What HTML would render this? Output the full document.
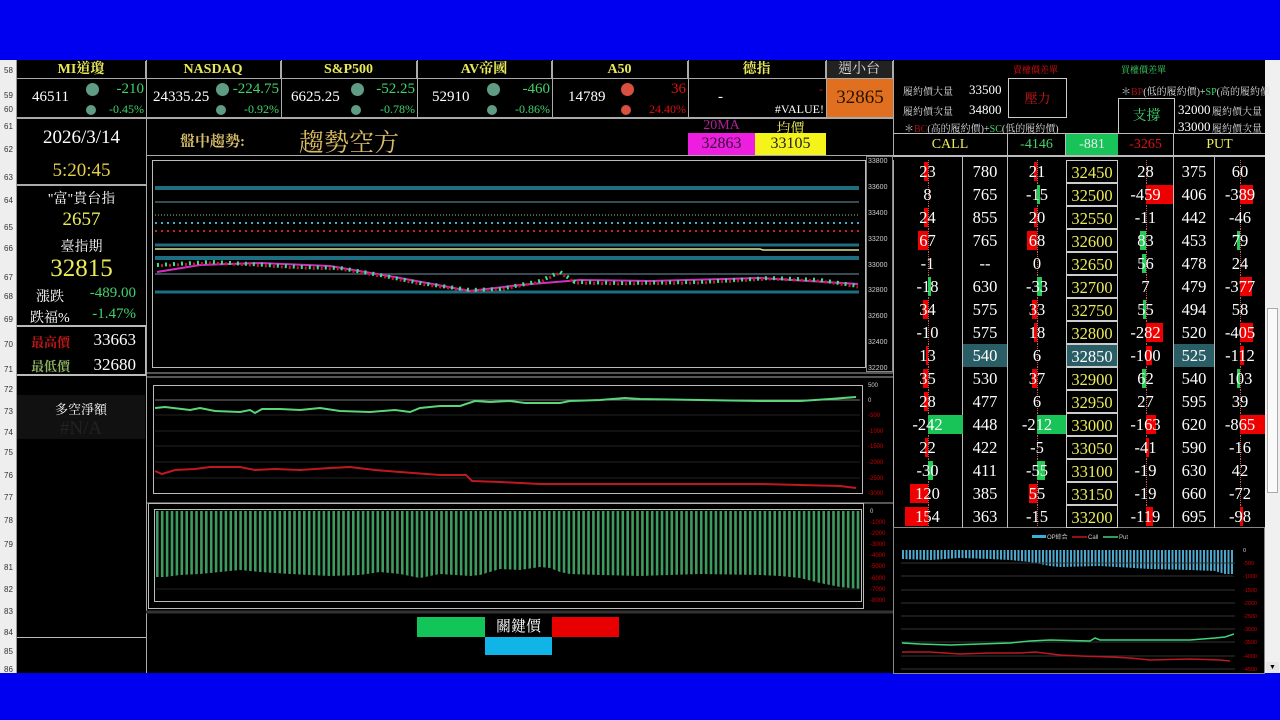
<!DOCTYPE html>
<html><head><meta charset="utf-8">
<style>
*{margin:0;padding:0;box-sizing:border-box}
body{width:1280px;height:720px;overflow:hidden;background:#000;position:relative;font-family:"Liberation Serif","Noto Serif CJK TC",serif;color:#fff}
.a{position:absolute;white-space:nowrap}
.blue{background:#0000f0}
.y{color:#ecec5a}
.g{color:#3fd46a}
.r{color:#d11}
.hd{position:absolute;top:61px;height:17px;font-size:14px;font-weight:bold;color:#e8e85a;text-align:center;line-height:17px;border-right:1px solid #aaa}
.rn{position:absolute;left:0;width:17px;font-size:8px;color:#333;text-align:center;font-family:"Liberation Sans",sans-serif}
.dot{position:absolute;border-radius:50%;background:#5f9c83}
.row{position:absolute;left:893px;width:372px;height:23px;font-size:16.5px;line-height:24px}
.row div{position:absolute;top:0;height:23px;text-align:center}
.c1{left:0;width:70px;border-right:1px solid #bbb}
.c2{left:70px;width:45px;border-right:1px solid #bbb}
.c3{left:115px;width:58px}
.c4{left:173px;width:52px;color:#ecec5a;border:1.5px solid #ccc}
.c5{left:225px;width:56px;border-right:1px solid #bbb}
.c6{left:281px;width:41px;border-right:1px solid #bbb}
.c7{left:322px;width:50px}
.row b{position:absolute;top:2px;height:19px;font-weight:normal}
.row i{position:absolute;top:0;height:23px;border-left:1px dotted #c55}
.row span{position:relative}
.hl{background:#2a5e66}
</style></head><body>
<div class="a blue" style="left:0;top:0;width:1280px;height:60px"></div>
<div class="a blue" style="left:0;top:673px;width:1280px;height:47px"></div>
<div class="a" style="left:0;top:60px;width:17px;height:613px;background:#eee;border-right:1px solid #999"></div>
<div class="rn" style="top:66px">58</div><div class="rn" style="top:91px">59</div><div class="rn" style="top:105px">60</div><div class="rn" style="top:122px">61</div><div class="rn" style="top:145px">62</div><div class="rn" style="top:173px">63</div><div class="rn" style="top:196px">64</div><div class="rn" style="top:223px">65</div><div class="rn" style="top:244px">66</div><div class="rn" style="top:273px">67</div><div class="rn" style="top:292px">68</div><div class="rn" style="top:315px">69</div><div class="rn" style="top:340px">70</div><div class="rn" style="top:365px">71</div><div class="rn" style="top:385px">72</div><div class="rn" style="top:407px">73</div><div class="rn" style="top:428px">74</div><div class="rn" style="top:448px">75</div><div class="rn" style="top:471px">76</div><div class="rn" style="top:493px">77</div><div class="rn" style="top:516px">78</div><div class="rn" style="top:540px">79</div><div class="rn" style="top:563px">81</div><div class="rn" style="top:585px">82</div><div class="rn" style="top:607px">83</div><div class="rn" style="top:628px">84</div><div class="rn" style="top:647px">85</div><div class="rn" style="top:665px">86</div>
<!-- scrollbar -->
<div class="a" style="left:1265px;top:60px;width:15px;height:613px;background:#f0f0f0"></div>
<div class="a" style="left:1267px;top:308px;width:11px;height:185px;background:#fafafa;border:1px solid #aaa"></div>
<div class="a" style="left:1266px;top:662px;width:13px;height:11px;background:#e6e6e6;font-size:7px;color:#000;text-align:center;line-height:11px">▼</div>

<!-- top headers -->
<div class="hd" style="left:17px;width:129px">MI道瓊</div>
<div class="hd" style="left:146px;width:135px">NASDAQ</div>
<div class="hd" style="left:281px;width:136px">S&amp;P500</div>
<div class="hd" style="left:417px;width:135px">AV帝國</div>
<div class="hd" style="left:552px;width:136px">A50</div>
<div class="hd" style="left:688px;width:138px">德指</div>
<div class="hd" style="left:826px;width:67px;background:#222;color:#ddd;font-weight:normal">週小台</div>
<div class="a" style="left:17px;top:78px;width:876px;height:1px;background:#aaa"></div>
<div class="a" style="left:17px;top:117px;width:876px;height:2px;background:#aaa"></div>
<div class="a" style="left:146px;top:60px;width:1px;height:58px;background:#aaa"></div>
<div class="a" style="left:281px;top:60px;width:1px;height:58px;background:#aaa"></div>
<div class="a" style="left:417px;top:60px;width:1px;height:58px;background:#aaa"></div>
<div class="a" style="left:552px;top:60px;width:1px;height:58px;background:#aaa"></div>
<div class="a" style="left:688px;top:60px;width:1px;height:58px;background:#aaa"></div>
<div class="a" style="left:826px;top:60px;width:1px;height:58px;background:#aaa"></div>

<div class="a" style="left:32px;top:89px;font-size:15px">46511</div>
<div class="dot" style="left:86px;top:83px;width:13px;height:13px"></div><div class="dot" style="left:86px;top:105px;width:10px;height:10px"></div>
<div class="a g" style="right:1136px;top:81px;font-size:15px">-210</div><div class="a g" style="right:1136px;top:102px;font-size:12px">-0.45%</div>

<div class="a" style="left:153px;top:89px;font-size:15px">24335.25</div>
<div class="dot" style="left:216px;top:83px;width:13px;height:13px"></div><div class="dot" style="left:216px;top:105px;width:10px;height:10px"></div>
<div class="a g" style="right:1001px;top:81px;font-size:15px">-224.75</div><div class="a g" style="right:1001px;top:102px;font-size:12px">-0.92%</div>

<div class="a" style="left:291px;top:89px;font-size:15px">6625.25</div>
<div class="dot" style="left:351px;top:83px;width:13px;height:13px"></div><div class="dot" style="left:351px;top:105px;width:10px;height:10px"></div>
<div class="a g" style="right:865px;top:81px;font-size:15px">-52.25</div><div class="a g" style="right:865px;top:102px;font-size:12px">-0.78%</div>

<div class="a" style="left:432px;top:89px;font-size:15px">52910</div>
<div class="dot" style="left:487px;top:83px;width:13px;height:13px"></div><div class="dot" style="left:487px;top:105px;width:10px;height:10px"></div>
<div class="a g" style="right:730px;top:81px;font-size:15px">-460</div><div class="a g" style="right:730px;top:102px;font-size:12px">-0.86%</div>

<div class="a" style="left:568px;top:89px;font-size:15px">14789</div>
<div class="dot" style="left:621px;top:83px;width:13px;height:13px;background:#d9503f"></div><div class="dot" style="left:621px;top:105px;width:10px;height:10px;background:#d9503f"></div>
<div class="a r" style="right:594px;top:81px;font-size:15px">36</div><div class="a r" style="right:594px;top:102px;font-size:12px">24.40%</div>

<div class="a" style="left:718px;top:89px;font-size:15px">-</div>
<div class="a r" style="right:457px;top:82px;font-size:12px">-</div>
<div class="a" style="right:456px;top:102px;font-size:12px">#VALUE!</div>

<div class="a" style="left:827px;top:79px;width:66px;height:38px;background:#e0701f;color:#2a1000;font-size:19px;text-align:center;line-height:38px">32865</div>

<!-- left panel -->
<div class="a" style="left:146px;top:118px;width:1px;height:555px;background:#aaa"></div>
<div class="a" style="left:17px;top:127px;width:129px;text-align:center;font-size:19px">2026/3/14</div>
<div class="a" style="left:17px;top:160px;width:129px;text-align:center;font-size:19px;color:#e6d04a">5:20:45</div>
<div class="a" style="left:17px;top:184px;width:129px;height:2px;background:#aaa"></div>
<div class="a" style="left:17px;top:188px;width:129px;text-align:center;font-size:14px">"富"貴台指</div>
<div class="a" style="left:17px;top:209px;width:129px;text-align:center;font-size:19px;color:#ecec5a">2657</div>
<div class="a" style="left:17px;top:236px;width:129px;text-align:center;font-size:14px">臺指期</div>
<div class="a" style="left:17px;top:255px;width:129px;text-align:center;font-size:25px;color:#ecec5a">32815</div>
<div class="a" style="left:36px;top:286px;font-size:14px">漲跌</div><div class="a g" style="right:1144px;top:285px;font-size:15px">-489.00</div>
<div class="a" style="left:30px;top:307px;font-size:14px">跌福%</div><div class="a g" style="right:1144px;top:306px;font-size:15px">-1.47%</div>
<div class="a" style="left:17px;top:325px;width:129px;height:51px;border:2px solid #bbb;border-left:none;border-right:1px solid #bbb"></div>
<div class="a" style="left:31px;top:332px;font-size:13px;color:#c01818;font-weight:bold">最高價</div><div class="a" style="right:1144px;top:330px;font-size:17px">33663</div>
<div class="a" style="left:31px;top:356px;font-size:13px;color:#8ab060;font-weight:bold">最低價</div><div class="a" style="right:1144px;top:355px;font-size:17px">32680</div>
<div class="a" style="left:17px;top:395px;width:128px;height:44px;background:#111"></div>
<div class="a" style="left:17px;top:399px;width:128px;text-align:center;font-size:13px">多空淨額</div>
<div class="a" style="left:17px;top:418px;width:128px;text-align:center;font-size:19px;color:#222">#N/A</div>
<div class="a" style="left:17px;top:637px;width:129px;height:1px;background:#bbb"></div>

<!-- middle header -->
<div class="a" style="left:180px;top:130px;font-size:15px;font-weight:bold;color:#d6bd6a">盤中趨勢:</div>
<div class="a" style="left:299px;top:123px;font-size:25px;color:#d9bc62">趨勢空方</div>
<div class="a" style="left:688px;top:118px;width:67px;text-align:center;font-size:14px;color:#b0209a">20MA</div>
<div class="a" style="left:755px;top:118px;width:71px;text-align:center;font-size:14px;color:#ecec5a">均價</div>
<div class="a" style="left:688px;top:133px;width:67px;height:22px;background:#ee1ee0;color:#301030;font-size:16px;text-align:center;line-height:22px">32863</div>
<div class="a" style="left:755px;top:133px;width:71px;height:22px;background:#f4f41a;color:#222;font-size:16px;text-align:center;line-height:22px">33105</div>
<div class="a" style="left:146px;top:155px;width:747px;height:1px;background:#aaa"></div>
<div class="a" style="left:893px;top:60px;width:1px;height:613px;background:#aaa"></div>

<svg class="a" style="left:0;top:0" width="1280" height="720">
<rect x="152.5" y="160.5" width="713" height="207" fill="none" stroke="#bbb"/>
<rect x="866.5" y="156.5" width="26" height="215" fill="none" stroke="#888"/>
<g font-family="Liberation Sans,sans-serif" font-size="7" fill="#ccc">
<text x="868" y="163">33800</text><text x="868" y="189">33600</text><text x="868" y="215">33400</text><text x="868" y="241">33200</text><text x="868" y="267">33000</text><text x="868" y="292">32800</text><text x="868" y="318">32600</text><text x="868" y="344">32400</text><text x="868" y="370">32200</text></g>
<line x1="155" y1="188" x2="859" y2="188" stroke="#1f6d80" stroke-width="4"/>
<line x1="155" y1="202" x2="859" y2="202" stroke="#4a6470" stroke-width="1.5"/>
<line x1="155" y1="215" x2="859" y2="215" stroke="#8c8" stroke-width="1" stroke-dasharray="1 2"/>
<line x1="155" y1="223" x2="859" y2="223" stroke="#3ab0c8" stroke-width="2" stroke-dasharray="2 4"/>
<line x1="155" y1="231" x2="859" y2="231" stroke="#c22" stroke-width="2" stroke-dasharray="2 4"/>
<line x1="155" y1="245" x2="859" y2="245" stroke="#1f6d80" stroke-width="3"/>
<polyline points="155,249 760,249 763,250 859,250" fill="none" stroke="#e0e090" stroke-width="1.5"/>
<line x1="155" y1="258" x2="859" y2="258" stroke="#1f6d80" stroke-width="4"/>
<line x1="155" y1="274" x2="859" y2="274" stroke="#4a6470" stroke-width="1.5"/>
<line x1="155" y1="292" x2="859" y2="292" stroke="#1f6d80" stroke-width="3"/>
<polyline points="157,272 200,265 260,263 330,266 400,278 470,291 520,285 580,280 650,281 760,278 858,284" fill="none" stroke="#d42ec0" stroke-width="2"/>
<polyline points="157,265 210,262 250,264 300,267 340,268 380,275 420,283 470,290 500,289 540,281 560,272 575,282 620,283 700,282 770,278 820,280 858,286" fill="none" stroke="#3ee08a" stroke-width="4" stroke-dasharray="2 6"/>
<polyline points="157,266 210,263 250,265 300,268 340,269 380,276 420,284 470,291 500,290 540,282 560,273 575,283 620,284 700,283 770,279 820,281 858,287" fill="none" stroke="#c81830" stroke-width="3" stroke-dasharray="2 6" stroke-dashoffset="4"/>
<line x1="146" y1="373" x2="893" y2="373" stroke="#aaa"/>
<line x1="146" y1="377" x2="893" y2="377" stroke="#aaa"/>
<rect x="153.5" y="385.5" width="709" height="108" fill="none" stroke="#bbb"/>
<g stroke="#222"><line x1="155" y1="415" x2="860" y2="415"/><line x1="155" y1="431" x2="860" y2="431"/><line x1="155" y1="446" x2="860" y2="446"/><line x1="155" y1="462" x2="860" y2="462"/><line x1="155" y1="478" x2="860" y2="478"/></g>
<line x1="155" y1="400" x2="860" y2="400" stroke="#777"/>
<polyline points="155,408 165,407 190,410 200,408 215,411 240,412 250,410 255,413 262,409 280,409 300,410 320,408 340,411 370,412 395,410 410,412 420,408 440,406 460,406 475,401 490,402 510,401 525,403 545,403 560,403 570,401 600,400 625,398 640,399 700,400 760,401 800,401 830,399 856,397" fill="none" stroke="#58d77a" stroke-width="2"/>
<polyline points="155,471 162,474 175,470 195,469 210,467 240,467 255,470 275,469 300,470 330,468 350,467 375,470 400,472 440,475 466,475 472,481 500,482 540,484 580,484 620,484 660,484 700,484 760,484 800,485 840,486 856,488" fill="none" stroke="#c01820" stroke-width="2"/>
<g font-family="Liberation Sans,sans-serif" font-size="6" fill="#c00"><text x="868" y="387" fill="#ccc">500</text><text x="868" y="402" fill="#ccc">0</text><text x="868" y="417">-500</text><text x="868" y="433">-1000</text><text x="868" y="448">-1500</text><text x="868" y="464">-2000</text><text x="868" y="480">-2500</text><text x="868" y="495">-3000</text></g>
<line x1="146" y1="503" x2="893" y2="503" stroke="#aaa"/>
<rect x="148.5" y="503.5" width="715" height="105" fill="none" stroke="#bbb"/>
<rect x="154.5" y="509.5" width="707" height="92" fill="none" stroke="#bbb"/>
<line x1="156" y1="553" x2="860" y2="553" stroke="#3e9a5e" stroke-width="84" stroke-dasharray="2.6 2.3"/>
<polygon points="156,577 165,577 180,575 200,574 220,572 240,570 260,572 290,574 330,576 360,575 380,572 400,574 420,578 440,574 470,576 480,575 500,569 520,570 540,567 550,568 560,572 570,574 600,575 640,576 700,574 760,575 780,576 800,578 820,583 840,587 860,589 860,600 156,600" fill="#000"/>
<line x1="156" y1="589" x2="860" y2="589" stroke="#222"/>
<g font-family="Liberation Sans,sans-serif" font-size="6" fill="#c00"><text x="870" y="513" fill="#ccc">0</text><text x="870" y="524">-1000</text><text x="870" y="535">-2000</text><text x="870" y="546">-3000</text><text x="870" y="557">-4000</text><text x="870" y="568">-5000</text><text x="870" y="580">-6000</text><text x="870" y="591">-7000</text><text x="870" y="602">-8000</text></g>
<line x1="146" y1="612" x2="893" y2="612" stroke="#333" stroke-width="3"/>
<rect x="893.5" y="527.5" width="371" height="146" fill="none" stroke="#888"/>
<rect x="1032" y="535" width="14" height="3" fill="#3ab0d8"/><text x="1047" y="539" font-size="6" fill="#ccc" font-family="Liberation Sans,Noto Sans CJK TC,sans-serif">OP綜合</text>
<line x1="1072" y1="537" x2="1087" y2="537" stroke="#c01820" stroke-width="1.5"/><text x="1088" y="539" font-size="6" fill="#ccc" font-family="Liberation Sans,sans-serif">Call</text>
<line x1="1103" y1="537" x2="1118" y2="537" stroke="#3ed47a" stroke-width="1.5"/><text x="1119" y="539" font-size="6" fill="#ccc" font-family="Liberation Sans,sans-serif">Put</text>
<g stroke="#333"><line x1="901" y1="563" x2="1235" y2="563"/><line x1="901" y1="576" x2="1235" y2="576"/><line x1="901" y1="590" x2="1235" y2="590"/><line x1="901" y1="603" x2="1235" y2="603"/><line x1="901" y1="616" x2="1235" y2="616"/><line x1="901" y1="629" x2="1235" y2="629"/><line x1="901" y1="642" x2="1235" y2="642"/><line x1="901" y1="656" x2="1235" y2="656"/><line x1="901" y1="669" x2="1235" y2="669"/></g>
<line x1="902" y1="562" x2="1234" y2="562" stroke="#4aa8cc" stroke-width="24" stroke-dasharray="2 1.5"/>
<polygon points="902,559 930,560 960,558 990,559 1010,560 1030,562 1050,566 1060,567 1100,566 1150,569 1190,570 1215,571 1225,574 1234,576 1236,578 1236,575 902,575" fill="#000"/>
<line x1="901" y1="563" x2="1235" y2="563" stroke="#333"/>
<polyline points="902,643 920,644 950,645 980,644 1010,643 1030,641 1050,640 1090,641 1095,638 1100,640 1130,640 1160,640 1190,640 1215,638 1225,637 1234,634" fill="none" stroke="#3ed47a" stroke-width="1.5"/>
<polyline points="902,652 930,652 960,654 990,653 1020,653 1035,652 1060,655 1080,656 1110,657 1130,658 1150,660 1190,659 1220,660 1230,661" fill="none" stroke="#c01820" stroke-width="1.5"/>
<g font-family="Liberation Sans,sans-serif" font-size="5.5" fill="#c00"><text x="1243" y="552" fill="#ccc">0</text><text x="1243" y="565">-500</text><text x="1243" y="578">-1000</text><text x="1243" y="592">-1500</text><text x="1243" y="605">-2000</text><text x="1243" y="618">-2500</text><text x="1243" y="631">-3000</text><text x="1243" y="644">-3500</text><text x="1243" y="658">-4000</text><text x="1243" y="671">-4500</text></g>
</svg>

<div class="a" style="left:417px;top:617px;width:68px;height:20px;background:#12c558"></div>
<div class="a" style="left:485px;top:617px;width:67px;height:20px;text-align:center;font-size:15px;line-height:20px">關鍵價</div>
<div class="a" style="left:552px;top:617px;width:67px;height:20px;background:#e80000"></div>
<div class="a" style="left:485px;top:637px;width:67px;height:18px;background:#10b4e6"></div>

<div class="a r" style="left:1013px;top:63px;font-size:9px">賣權價差單</div>
<div class="a g" style="left:1121px;top:63px;font-size:9px">買權價差單</div>
<div class="a" style="left:903px;top:83px;font-size:10px;color:#ddd">履約價大量</div><div class="a" style="left:969px;top:82px;font-size:13px">33500</div>
<div class="a" style="left:903px;top:103px;font-size:10px;color:#ddd">履約價次量</div><div class="a" style="left:969px;top:102px;font-size:13px">34800</div>
<div class="a" style="left:1008px;top:78px;width:59px;height:40px;border:1px solid #ccc;color:#d01818;font-size:13px;text-align:center;line-height:40px">壓力</div>
<div class="a" style="left:904px;top:120px;font-size:10px;color:#ddd">＊<span style="color:#a01010">BC</span>(高的履約價)+<span class="g">SC</span>(低的履約價)</div>
<div class="a" style="left:1121px;top:83px;font-size:10px;color:#ddd">＊<span style="color:#a01010">BP</span>(低的履約價)+<span class="g">SP</span>(高的履約價</div>
<div class="a" style="left:1118px;top:98px;width:57px;height:36px;border:1px solid #ccc;border-bottom:none;color:#3fd46a;font-size:14px;text-align:center;line-height:36px">支撐</div>
<div class="a" style="left:1178px;top:102px;font-size:13px">32000</div><div class="a" style="left:1212px;top:103px;font-size:10px;color:#ddd">履約價大量</div>
<div class="a" style="left:1178px;top:119px;font-size:13px">33000</div><div class="a" style="left:1212px;top:120px;font-size:10px;color:#ddd">履約價次量</div>

<div class="a" style="left:893px;top:133px;width:372px;height:1px;background:#bbb"></div>
<div class="a" style="left:893px;top:155px;width:372px;height:2px;background:#bbb"></div>
<div class="a y" style="left:893px;top:134px;width:115px;height:21px;text-align:center;font-size:14px;line-height:21px;border-right:1px solid #bbb">CALL</div>
<div class="a g" style="left:1008px;top:134px;width:58px;height:21px;text-align:center;font-size:14px;line-height:21px;border-right:1px solid #bbb">-4146</div>
<div class="a" style="left:1066px;top:134px;width:52px;height:21px;background:#18c45a;text-align:center;font-size:14px;line-height:21px;color:#eee">-881</div>
<div class="a r" style="left:1118px;top:134px;width:56px;height:21px;text-align:center;font-size:14px;line-height:21px;border-right:1px solid #bbb">-3265</div>
<div class="a y" style="left:1174px;top:134px;width:91px;height:21px;text-align:center;font-size:14px;line-height:21px">PUT</div>
<div class="a" style="left:893px;top:157px;width:372px;height:3px;background:#000"></div>
<div class="a" style="left:962px;top:157px;width:1px;height:3px;background:#bbb"></div>
<div class="a" style="left:1007px;top:157px;width:1px;height:3px;background:#bbb"></div>
<div class="a" style="left:1173px;top:157px;width:1px;height:3px;background:#bbb"></div>
<div class="a" style="left:1214px;top:157px;width:1px;height:3px;background:#bbb"></div>

<div class="row" style="top:160px"><div class="c1"><i style="left:35px"></i><b style="left:31px;width:4px;background:#e00"></b><span>23</span></div><div class="c2">780</div><div class="c3"><i style="left:29px"></i><b style="left:26px;width:3px;background:#e00"></b><span>21</span></div><div class="c4">32450</div><div class="c5"><i style="left:28px"></i><span>28</span></div><div class="c6">375</div><div class="c7"><i style="left:25px"></i><span>60</span></div></div>
<div class="row" style="top:183px"><div class="c1"><i style="left:35px"></i><span>8</span></div><div class="c2">765</div><div class="c3"><i style="left:29px"></i><b style="left:29px;width:3px;background:#2c5"></b><span>-15</span></div><div class="c4">32500</div><div class="c5"><i style="left:28px"></i><b style="left:28px;width:27px;background:#e00"></b><span>-459</span></div><div class="c6">406</div><div class="c7"><i style="left:25px"></i><b style="left:25px;width:13px;background:#e00"></b><span>-389</span></div></div>
<div class="row" style="top:206px"><div class="c1"><i style="left:35px"></i><b style="left:31px;width:4px;background:#e00"></b><span>24</span></div><div class="c2">855</div><div class="c3"><i style="left:29px"></i><b style="left:26px;width:3px;background:#e00"></b><span>20</span></div><div class="c4">32550</div><div class="c5"><i style="left:28px"></i><span>-11</span></div><div class="c6">442</div><div class="c7"><i style="left:25px"></i><span>-46</span></div></div>
<div class="row" style="top:229px"><div class="c1"><i style="left:35px"></i><b style="left:25px;width:10px;background:#e00"></b><span>67</span></div><div class="c2">765</div><div class="c3"><i style="left:29px"></i><b style="left:19px;width:10px;background:#e00"></b><span>68</span></div><div class="c4">32600</div><div class="c5"><i style="left:28px"></i><b style="left:22px;width:6px;background:#2c5"></b><span>83</span></div><div class="c6">453</div><div class="c7"><i style="left:25px"></i><b style="left:22px;width:3px;background:#2c5"></b><span>79</span></div></div>
<div class="row" style="top:252px"><div class="c1"><i style="left:35px"></i><span>-1</span></div><div class="c2">--</div><div class="c3"><i style="left:29px"></i><span>0</span></div><div class="c4">32650</div><div class="c5"><i style="left:28px"></i><b style="left:24px;width:4px;background:#2c5"></b><span>56</span></div><div class="c6">478</div><div class="c7"><i style="left:25px"></i><span>24</span></div></div>
<div class="row" style="top:275px"><div class="c1"><i style="left:35px"></i><b style="left:35px;width:3px;background:#2c5"></b><span>-18</span></div><div class="c2">630</div><div class="c3"><i style="left:29px"></i><b style="left:29px;width:5px;background:#2c5"></b><span>-33</span></div><div class="c4">32700</div><div class="c5"><i style="left:28px"></i><span>7</span></div><div class="c6">479</div><div class="c7"><i style="left:25px"></i><b style="left:25px;width:12px;background:#e00"></b><span>-377</span></div></div>
<div class="row" style="top:298px"><div class="c1"><i style="left:35px"></i><b style="left:30px;width:5px;background:#e00"></b><span>34</span></div><div class="c2">575</div><div class="c3"><i style="left:29px"></i><b style="left:24px;width:5px;background:#e00"></b><span>33</span></div><div class="c4">32750</div><div class="c5"><i style="left:28px"></i><b style="left:25px;width:3px;background:#2c5"></b><span>55</span></div><div class="c6">494</div><div class="c7"><i style="left:25px"></i><span>58</span></div></div>
<div class="row" style="top:321px"><div class="c1"><i style="left:35px"></i><span>-10</span></div><div class="c2">575</div><div class="c3"><i style="left:29px"></i><b style="left:26px;width:3px;background:#e00"></b><span>18</span></div><div class="c4">32800</div><div class="c5"><i style="left:28px"></i><b style="left:28px;width:17px;background:#e00"></b><span>-282</span></div><div class="c6">520</div><div class="c7"><i style="left:25px"></i><b style="left:25px;width:13px;background:#e00"></b><span>-405</span></div></div>
<div class="row" style="top:344px"><div class="c1"><i style="left:35px"></i><b style="left:33px;width:2px;background:#e00"></b><span>13</span></div><div class="c2 hl">540</div><div class="c3"><i style="left:29px"></i><span>6</span></div><div class="c4 hl" style="color:#fff">32850</div><div class="c5"><i style="left:28px"></i><b style="left:28px;width:6px;background:#e00"></b><span>-100</span></div><div class="c6 hl">525</div><div class="c7"><i style="left:25px"></i><b style="left:25px;width:4px;background:#e00"></b><span>-112</span></div></div>
<div class="row" style="top:367px"><div class="c1"><i style="left:35px"></i><b style="left:30px;width:5px;background:#e00"></b><span>35</span></div><div class="c2">530</div><div class="c3"><i style="left:29px"></i><b style="left:24px;width:5px;background:#e00"></b><span>37</span></div><div class="c4">32900</div><div class="c5"><i style="left:28px"></i><b style="left:24px;width:4px;background:#2c5"></b><span>62</span></div><div class="c6">540</div><div class="c7"><i style="left:25px"></i><b style="left:22px;width:3px;background:#2c5"></b><span>103</span></div></div>
<div class="row" style="top:390px"><div class="c1"><i style="left:35px"></i><b style="left:31px;width:4px;background:#e00"></b><span>28</span></div><div class="c2">477</div><div class="c3"><i style="left:29px"></i><span>6</span></div><div class="c4">32950</div><div class="c5"><i style="left:28px"></i><span>27</span></div><div class="c6">595</div><div class="c7"><i style="left:25px"></i><span>39</span></div></div>
<div class="row" style="top:413px"><div class="c1"><i style="left:35px"></i><b style="left:35px;width:35px;background:#18c458"></b><span>-242</span></div><div class="c2">448</div><div class="c3"><i style="left:29px"></i><b style="left:29px;width:29px;background:#18c458"></b><span>-212</span></div><div class="c4">33000</div><div class="c5"><i style="left:28px"></i><b style="left:28px;width:10px;background:#e00"></b><span>-163</span></div><div class="c6">620</div><div class="c7"><i style="left:25px"></i><b style="left:25px;width:25px;background:#e00"></b><span>-865</span></div></div>
<div class="row" style="top:436px"><div class="c1"><i style="left:35px"></i><b style="left:32px;width:3px;background:#e00"></b><span>22</span></div><div class="c2">422</div><div class="c3"><i style="left:29px"></i><span>-5</span></div><div class="c4">33050</div><div class="c5"><i style="left:28px"></i><b style="left:28px;width:3px;background:#e00"></b><span>-41</span></div><div class="c6">590</div><div class="c7"><i style="left:25px"></i><span>-16</span></div></div>
<div class="row" style="top:459px"><div class="c1"><i style="left:35px"></i><b style="left:35px;width:5px;background:#2c5"></b><span>-30</span></div><div class="c2">411</div><div class="c3"><i style="left:29px"></i><b style="left:29px;width:8px;background:#2c5"></b><span>-55</span></div><div class="c4">33100</div><div class="c5"><i style="left:28px"></i><span>-19</span></div><div class="c6">630</div><div class="c7"><i style="left:25px"></i><span>42</span></div></div>
<div class="row" style="top:482px"><div class="c1"><i style="left:35px"></i><b style="left:17px;width:18px;background:#e00"></b><span>120</span></div><div class="c2">385</div><div class="c3"><i style="left:29px"></i><b style="left:21px;width:8px;background:#e00"></b><span>55</span></div><div class="c4">33150</div><div class="c5"><i style="left:28px"></i><span>-19</span></div><div class="c6">660</div><div class="c7"><i style="left:25px"></i><span>-72</span></div></div>
<div class="row" style="top:505px"><div class="c1"><i style="left:35px"></i><b style="left:12px;width:23px;background:#e00"></b><span>154</span></div><div class="c2">363</div><div class="c3"><i style="left:29px"></i><span>-15</span></div><div class="c4">33200</div><div class="c5"><i style="left:28px"></i><b style="left:28px;width:7px;background:#e00"></b><span>-119</span></div><div class="c6">695</div><div class="c7"><i style="left:25px"></i><b style="left:25px;width:3px;background:#e00"></b><span>-98</span></div></div>
</body></html>
